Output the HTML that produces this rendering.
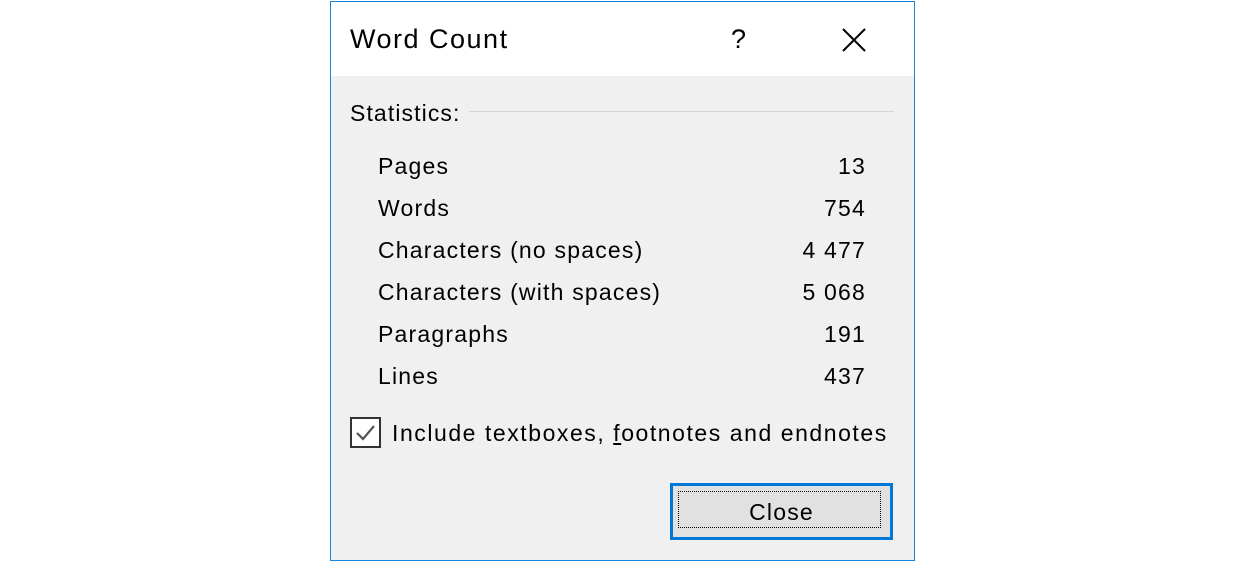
<!DOCTYPE html>
<html><head><style>
body{margin:0;width:1250px;height:563px;background:#fff;position:relative;font-family:"Liberation Sans",sans-serif;color:#000;overflow:hidden}
.dlg{position:absolute;left:330px;top:1px;width:583px;height:558px;border:1px solid #1883d7;background:#f0f0f0}
.title{position:absolute;left:0;top:0;width:583px;height:74px;background:#fff}
.t{position:absolute;white-space:nowrap}
.row{position:absolute;left:47px;width:488px;font-size:23px;letter-spacing:1.2px;height:30px}
.row .v{position:absolute;right:0;top:0}
</style></head><body>
<div class="dlg">
<div class="title">
<div class="t" style="left:19px;top:22px;font-size:27px;letter-spacing:1.5px">Word Count</div>
<div class="t" style="left:400px;top:22px;font-size:27px">?</div>
<svg style="position:absolute;left:511px;top:26px" width="24" height="24"><path d="M1 1L23 23M23 1L1 23" stroke="#000" stroke-width="2"/></svg>
</div>
<div class="t" style="left:19px;top:98px;font-size:23px;letter-spacing:1.1px">Statistics:</div>
<div style="position:absolute;left:138px;top:109px;width:425px;height:1px;background:#d5d5d5"></div>
<div class="row" style="top:151px">Pages<span class="v">13</span></div>
<div class="row" style="top:193px">Words<span class="v">754</span></div>
<div class="row" style="top:235px">Characters (no spaces)<span class="v">4 477</span></div>
<div class="row" style="top:277px">Characters (with spaces)<span class="v">5 068</span></div>
<div class="row" style="top:319px">Paragraphs<span class="v">191</span></div>
<div class="row" style="top:361px">Lines<span class="v">437</span></div>
<div style="position:absolute;left:19px;top:415px;width:27px;height:27px;border:2px solid #333;background:#fff"></div>
<svg style="position:absolute;left:21px;top:417px" width="27" height="27"><path d="M5 14L11 20L22 7" fill="none" stroke="#555" stroke-width="2.2"/></svg>
<div class="t" style="left:61px;top:418px;font-size:23px;letter-spacing:1.55px">Include textboxes, <u>f</u>ootnotes and endnotes</div>
<div style="position:absolute;left:339px;top:481px;width:217px;height:51px;border:3px solid #0078d7;background:#e1e1e1"></div>
<div style="position:absolute;left:347px;top:489px;width:201px;height:35px;border:1px dotted #000"></div>
<div class="t" style="left:339px;top:497px;width:223px;text-align:center;font-size:23px;letter-spacing:1.2px">Close</div>
</div>
</body></html>
